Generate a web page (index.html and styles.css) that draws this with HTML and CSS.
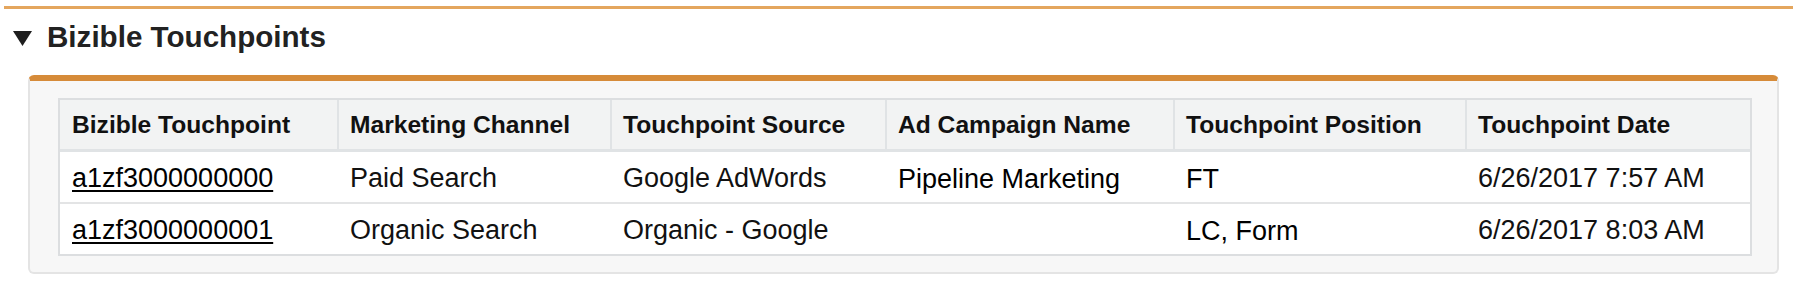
FILE: index.html
```html
<!DOCTYPE html>
<html lang="en">
<head>
<meta charset="utf-8">
<title>Bizible Touchpoints</title>
<link rel="stylesheet" href="styles.css">
</head>
<body>
<div class="topline"></div>
<div class="section-head">
  <svg class="twist" width="19" height="15" viewBox="0 0 19 15" aria-hidden="true"><path d="M0 0H19L9.5 15Z" fill="#1e1e1e"/></svg>
  <h3 class="section-title">Bizible Touchpoints</h3>
</div>
<div class="panel">
  <table class="list">
    <thead>
      <tr>
        <th class="c1">Bizible Touchpoint</th>
        <th class="c2">Marketing Channel</th>
        <th class="c3">Touchpoint Source</th>
        <th class="c4">Ad Campaign Name</th>
        <th class="c5">Touchpoint Position</th>
        <th class="c6">Touchpoint Date</th>
      </tr>
    </thead>
    <tbody>
      <tr>
        <td><a class="rec-link" href="#">a1zf3000000000</a></td>
        <td>Paid Search</td>
        <td>Google AdWords</td>
        <td class="edited">Pipeline Marketing</td>
        <td class="edited">FT</td>
        <td>6/26/2017 7:57 AM</td>
      </tr>
      <tr>
        <td><a class="rec-link" href="#">a1zf3000000001</a></td>
        <td>Organic Search</td>
        <td>Organic - Google</td>
        <td></td>
        <td class="edited">LC, Form</td>
        <td>6/26/2017 8:03 AM</td>
      </tr>
    </tbody>
  </table>
</div>
</body>
</html>
```
FILE: styles.css
```css
html, body {
  margin: 0;
  padding: 0;
  background: #ffffff;
  font-family: "Liberation Sans", Arial, Helvetica, sans-serif;
  color: #111;
}

.topline {
  height: 3px;
  margin: 6px 0 0 4px;
  background: #e4a65e;
}

.section-head {
  display: flex;
  align-items: flex-start;
  height: 34px;
  margin-top: 11px;
  padding-left: 13px;
}

.twist {
  margin-top: 11px;
  margin-right: 15px;
  flex: none;
}

.section-title {
  margin: 0;
  font-size: 29.6px;
  line-height: 34px;
  font-weight: bold;
  color: #222;
}

.panel {
  box-sizing: border-box;
  width: 1751px;
  margin: 21px 0 0 28px;
  padding: 17px 25px 16px 28px;
  background: #f7f7f7;
  border: 2px solid #e4e4e4;
  border-top: 6px solid #d68b39;
  border-radius: 6px;
}

.list {
  width: 1694px;
  table-layout: fixed;
  border-collapse: separate;
  border-spacing: 0;
  border: 2px solid #dcdee0;
  background: #ffffff;
}

.list th,
.list td {
  box-sizing: border-box;
  padding: 0 0 0 11px;
  text-align: left;
  vertical-align: middle;
  white-space: nowrap;
  overflow: hidden;
}

.list th {
  height: 52px;
  font-size: 24.6px;
  font-weight: bold;
  color: #111;
  background: #f2f3f3;
  border-right: 2px solid #e0e3e5;
  border-bottom: 3px solid #e0e3e5;
}

.list th.c6 {
  border-right: none;
}

.list .c1 { width: 279px; padding-left: 12px; }
.list .c2 { width: 273px; }
.list .c3 { width: 275px; }
.list .c4 { width: 288px; }
.list .c5 { width: 292px; }
.list .c6 { width: 283px; }

.list td {
  height: 52px;
  padding-top: 2px;
  font-size: 27px;
  color: #111;
  border-bottom: 2px solid #e3e4e5;
}

.list tbody tr:last-child td {
  height: 50px;
  border-bottom: none;
}

.list td:first-child {
  padding-left: 12px;
}

.list td.edited {
  color: #000;
  padding-top: 5px;
}

.rec-link {
  color: #000;
  text-decoration: underline;
  text-decoration-thickness: 2px;
  text-underline-offset: 3px;
}
```
